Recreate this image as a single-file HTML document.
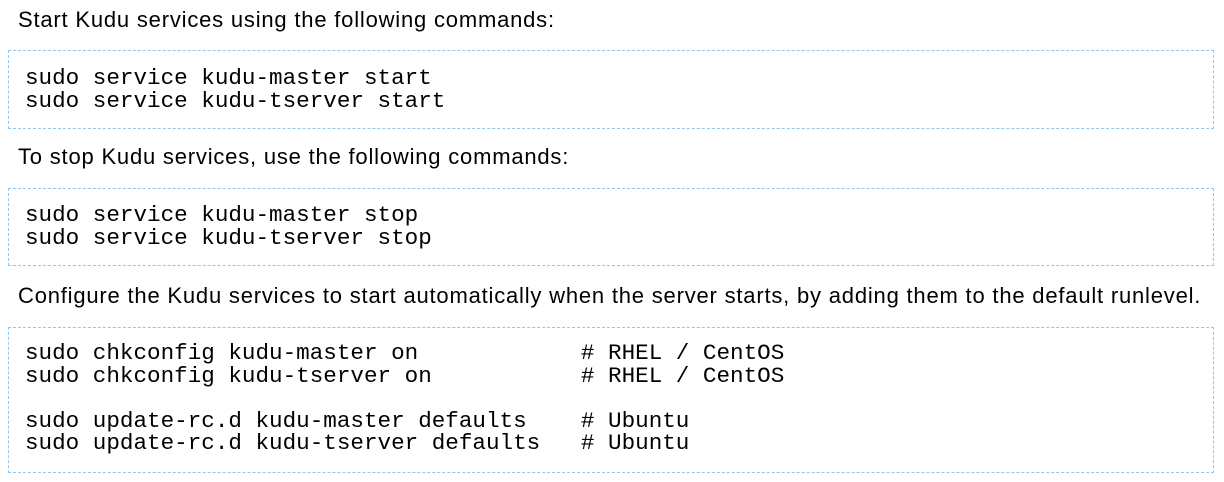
<!DOCTYPE html>
<html><head><style>
body{margin:0;width:1224px;height:482px;background:#fff;position:relative;overflow:hidden;font-family:"Liberation Sans",sans-serif;color:#000}
.h{position:absolute;left:18px;font-size:22px;letter-spacing:0.8px;white-space:nowrap;line-height:24px}
.b{position:absolute;left:8px;width:1206px;border:1.5px dashed #92c6ee;box-sizing:border-box}
pre{position:absolute;left:25px;margin:0;font-family:"Liberation Mono","Courier New",monospace;font-size:22.6px;line-height:22.5px;color:#000}
</style></head><body>
<div class="h" style="top:8px">Start Kudu services using the following commands:</div>
<div class="b" style="top:50px;height:79px"></div>
<pre style="top:67px">sudo service kudu-master start
sudo service kudu-tserver start</pre>
<div class="h" style="top:145px">To stop Kudu services, use the following commands:</div>
<div class="b" style="top:188px;height:78px"></div>
<pre style="top:204px">sudo service kudu-master stop
sudo service kudu-tserver stop</pre>
<div class="h" style="top:284px">Configure the Kudu services to start automatically when the server starts, by adding them to the default runlevel.</div>
<div class="b" style="top:327px;height:146px"></div>
<pre style="top:342px">sudo chkconfig kudu-master on            # RHEL / CentOS
sudo chkconfig kudu-tserver on           # RHEL / CentOS

sudo update-rc.d kudu-master defaults    # Ubuntu
sudo update-rc.d kudu-tserver defaults   # Ubuntu</pre>
</body></html>
